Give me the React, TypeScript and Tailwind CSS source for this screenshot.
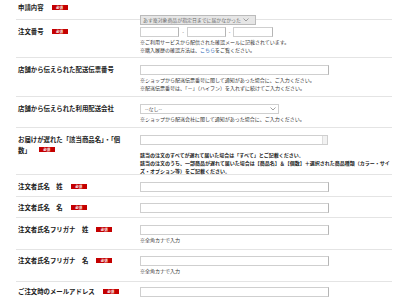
import React from 'react';

const Badge = () => (
  <span className="inline-flex items-center justify-center w-[16px] h-[5px] bg-[#c40000] text-white text-[3.5px] leading-none font-bold align-middle ml-[8px] relative -top-[1px]">
    必須
  </span>
);

const Chevron = () => (
  <svg width="6" height="4" viewBox="0 0 6 4" className="shrink-0">
    <path d="M0.5 0.5 L3 3 L5.5 0.5" fill="none" stroke="#888" strokeWidth="0.8" />
  </svg>
);

type RowProps = {
  label: React.ReactNode;
  req?: boolean;
  h: string;
  pt: string;
  last?: boolean;
  children?: React.ReactNode;
};

const Row = ({ label, req, h, pt, last, children }: RowProps) => (
  <div className={`grid grid-cols-[124px_1fr] ${h} ${pt} ${last ? '' : 'border-b border-[#e4e4e4]'}`}>
    <div className="pl-[2px] pr-[8px] text-[6.4px] leading-[10.5px] font-bold text-[#222]">
      {label}
      {req && <Badge />}
    </div>
    <div>{children}</div>
  </div>
);

const Box = ({ w = 'w-[189px]' }: { w?: string }) => (
  <div className={`${w} h-[10px] border border-[#cfcfcf] border-r-[#b5b5b5] bg-white`} />
);

const Note = ({ children }: { children: React.ReactNode }) => (
  <div className="mt-[1px] text-[5px] leading-[7.5px] text-[#333] whitespace-nowrap">{children}</div>
);

export default function App() {
  return (
    <div className="w-[400px] h-[300px] bg-white overflow-hidden font-['Noto_Sans_CJK_JP',sans-serif]">
      <div className="ml-[16px] w-[376px]">
        <Row label="申請内容" req h="h-[20px]" pt="pt-[3px]">
          <div className="inline-flex items-center gap-[2px] w-[116px] h-[10px] px-[2px] border border-[#bbb] bg-[#e6e6e6] text-[4.9px] text-[#666] whitespace-nowrap">
            あす楽対象商品が指定日までに届かなかった
            <Chevron />
          </div>
        </Row>

        <Row label="注文番号" req h="h-[38px]" pt="pt-[7px]">
          <div className="flex items-center">
            <Box w="w-[39px]" />
            <span className="w-[8px] text-center text-[5px] text-[#555]">-</span>
            <Box w="w-[39px]" />
            <span className="w-[7px] text-center text-[5px] text-[#555]">-</span>
            <Box w="w-[40px]" />
          </div>
          <Note>
            ※ご利用サービスから配信された確認メールに記載されています。
            <br />
            ※購入履歴の確認方法は、<span className="text-[#1a5fb4]">こちら</span>をご覧ください。
          </Note>
        </Row>

        <Row label="店舗から伝えられた配送伝票番号" h="h-[39px]" pt="pt-[7px]">
          <Box />
          <Note>
            ※ショップから配送伝票番号に関して通知があった場合に、ご入力ください。
            <br />
            ※配送伝票番号は、「－」（ハイフン）を入れずに続けてご入力ください。
          </Note>
        </Row>

        <Row label="店舗から伝えられた利用配送会社" h="h-[31px]" pt="pt-[7px]">
          <div className="flex items-center justify-between w-[139px] h-[10px] pl-[4px] pr-[2px] border border-[#cfcfcf] bg-white text-[5px] text-[#555]">
            --なし--
            <Chevron />
          </div>
          <Note>※ショップから配送会社に関して通知があった場合に、ご入力ください。</Note>
        </Row>

        <Row
          label={
            <>
              お届けが遅れた「該当商品名」・「個
              <br />
              数」
            </>
          }
          req
          h="h-[47px]"
          pt="pt-[7px]"
        >
          <div className="flex justify-end w-[188px] h-[10px] border border-[#cfcfcf] bg-white">
            <div className="w-[5px] h-full border-l border-[#ddd] bg-[#f2f2f2]" />
          </div>
          <div className="mt-[6px] text-[5px] leading-[8px] font-bold text-[#222] whitespace-nowrap">
            該当の注文のすべてが遅れて届いた場合は「すべて」とご記載ください。
            <br />
            該当の注文のうち、一部商品が遅れて届いた場合は【商品名】＆【個数】＋選択された商品種類（カラー・サイ
            <br />
            ズ・オプション等）をご記載ください。
          </div>
        </Row>

        <Row label="注文者氏名　姓" req h="h-[22px]" pt="pt-[7px]">
          <Box />
        </Row>

        <Row label="注文者氏名　名" req h="h-[21px]" pt="pt-[6px]">
          <Box />
        </Row>

        <Row label="注文者氏名フリガナ　姓" req h="h-[32px]" pt="pt-[7px]">
          <Box />
          <Note>※全角カナで入力</Note>
        </Row>

        <Row label="注文者氏名フリガナ　名" req h="h-[32px]" pt="pt-[6px]">
          <Box />
          <Note>※全角カナで入力</Note>
        </Row>

        <Row label="ご注文時のメールアドレス" req h="h-[30px]" pt="pt-[5px]" last>
          <Box />
        </Row>
      </div>
    </div>
  );
}
